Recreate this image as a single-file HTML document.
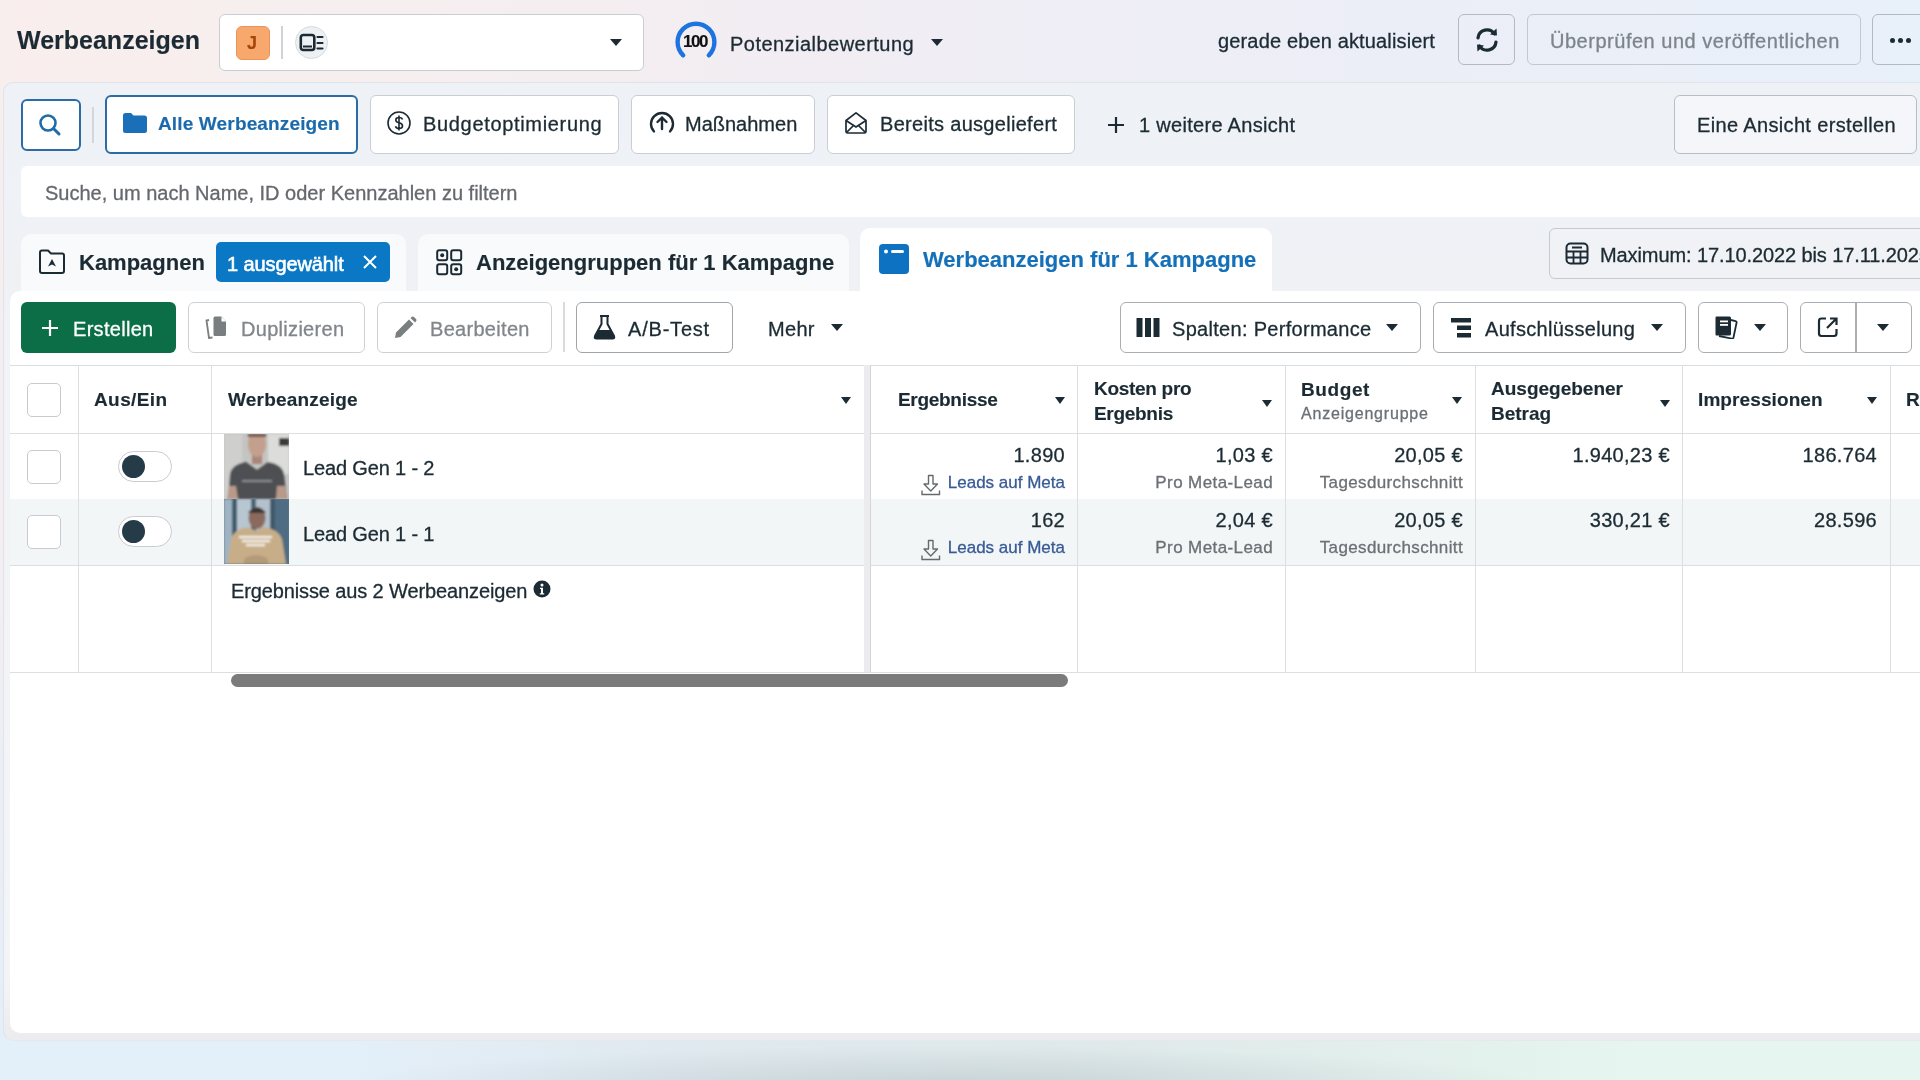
<!DOCTYPE html>
<html><head><meta charset="utf-8">
<style>
*{box-sizing:border-box;margin:0;padding:0}
html,body{width:1920px;height:1080px;overflow:hidden}
body{position:relative;font-family:"Liberation Sans",sans-serif;color:#1c2b33;
 background:linear-gradient(90deg,#f9eeed 0%,#f5eef0 28%,#f0edf4 48%,#eceef7 72%,#e8f0f9 100%);}
.a{position:absolute}
.t{position:absolute;white-space:nowrap;line-height:1;will-change:transform;-webkit-text-stroke:0.3px currentColor}
.b{-webkit-text-stroke:0.15px currentColor}
.r{text-align:right}
.btn{position:absolute;background:#fff;border:1.5px solid #c9ced3;border-radius:6px}
.caret{position:absolute;width:0;height:0;border-left:6px solid transparent;border-right:6px solid transparent;border-top:7px solid #1c2b33}
.hc{position:absolute;width:0;height:0;border-left:5.5px solid transparent;border-right:5.5px solid transparent;border-top:7px solid #1c2b33}
#bottom{position:absolute;left:0;top:1041px;width:1920px;height:39px;
 background:radial-gradient(ellipse 600px 40px at 950px 45px,rgba(170,185,190,0.45),rgba(170,185,190,0) 100%),linear-gradient(90deg,#e3eff9 0%,#e3eff9 18%,#e0e9ef 35%,#dfe8ea 55%,#e2efec 72%,#e6f5ef 85%,#e7f5f0 100%)}
#panel{position:absolute;left:3px;top:82px;width:1930px;height:959px;border-radius:10px;
 background:linear-gradient(180deg,#eef2f6 0px,#eff1f5 200px,#f1f3f6 260px,#f3f4f7 900px,#ececee 950px);border:1px solid #e0e3e7;border-bottom-color:#e6e8ea}
#lstrip{position:absolute;left:0;top:0;width:14px;height:1080px;background:linear-gradient(180deg,#f8eeed 0%,#f4eef2 50%,#e8eef7 85%,#e3eff9 100%)}
#card{position:absolute;left:10px;top:291px;width:1920px;height:742px;background:#fff;border-radius:10px 0 0 10px}
.s20{font-size:20px;letter-spacing:0.3px}
.hd{font-size:19px;letter-spacing:-0.3px}
.sm{font-size:17px;letter-spacing:0.4px}
.b{font-weight:bold}
.g{color:#767b80}
.vl{position:absolute;width:1.5px;background:#dcdfe2}
.hl{position:absolute;height:1.5px;background:#dcdfe2}
</style></head><body>
<div id="lstrip"></div>
<div id="bottom"></div>

<!-- top bar -->
<div class="t b" style="left:17px;top:28px;font-size:25px;">Werbeanzeigen</div>
<div class="btn" style="left:219px;top:14px;width:425px;height:57px;"></div>
<div class="a" style="left:236px;top:26px;width:34px;height:34px;border-radius:6px;background:#f8a86c;border:1px solid #eb9457"></div>
<div class="t b" style="left:247px;top:34px;font-size:18px;color:#a3470c">J</div>
<div class="a" style="left:281px;top:26px;width:1.5px;height:33px;background:#cfd3d7"></div>
<div class="a" style="left:295px;top:26px;width:33px;height:33px;border-radius:50%;background:#eef1f4;border:1px solid #d6dade"></div>
<svg class="a" style="left:299px;top:33px" width="26" height="20" viewBox="0 0 26 20">
 <rect x="1.8" y="2" width="13.5" height="15" rx="2.5" fill="#eef1f4" stroke="#1c2b33" stroke-width="2.6"/>
 <rect x="4" y="12.5" width="9" height="2" fill="#1c2b33"/>
 <path d="M18.5 4h5M18.5 10h5M18.5 15.5h5" stroke="#1c2b33" stroke-width="2.2" stroke-linecap="round"/>
</svg>
<div class="caret" style="left:610px;top:39px"></div>

<svg class="a" style="left:674px;top:20px" width="46" height="40" viewBox="0 0 46 40">
 <path d="M9.2 35.3 A18.4 18.4 0 1 1 34.8 35.3" fill="none" stroke="#1b74e0" stroke-width="4.4" stroke-linecap="round"/>
</svg>
<div class="t b" style="left:683px;top:32.8px;font-size:17px;letter-spacing:-1.4px;color:#111">100</div>
<div class="t s20" style="left:730px;top:34px;letter-spacing:0.47px">Potenzialbewertung</div>
<div class="caret" style="left:931px;top:39px"></div>

<div class="t s20" style="left:1218px;top:31px;letter-spacing:0.15px">gerade eben aktualisiert</div>
<div class="btn" style="left:1458px;top:14px;width:57px;height:51px;background:transparent;border-color:#b4b9c0"></div>
<svg class="a" style="left:1473px;top:27px" width="28" height="26" viewBox="0 0 28 26">
 <path d="M5 11 A9 9 0 0 1 21.5 7" fill="none" stroke="#1c2b33" stroke-width="3.2" stroke-linecap="round"/>
 <path d="M23 15 A9 9 0 0 1 6.5 19" fill="none" stroke="#1c2b33" stroke-width="3.2" stroke-linecap="round"/>
 <path d="M17 7.5 L24 8.5 L23.5 1.5Z" fill="#1c2b33"/>
 <path d="M11 18.5 L4 17.5 L4.5 24.5Z" fill="#1c2b33"/>
</svg>
<div class="btn" style="left:1527px;top:14px;width:334px;height:51px;background:transparent;border-color:#c3c8ce"></div>
<div class="t s20" style="left:1550px;top:31px;color:#7d848b;letter-spacing:0.52px">Überprüfen und veröffentlichen</div>
<div class="btn" style="left:1872px;top:14px;width:60px;height:51px;background:transparent;border-color:#b4b9c0"></div>
<div class="a" style="left:1890px;top:38px;width:5px;height:5px;border-radius:50%;background:#1c2b33;box-shadow:8px 0 0 #1c2b33,16px 0 0 #1c2b33"></div>

<div id="panel"></div>

<!-- view tabs row -->
<div class="btn" style="left:21px;top:99px;width:60px;height:52px;border:2px solid #2a6ca3"></div>
<svg class="a" style="left:38px;top:113px" width="26" height="26" viewBox="0 0 26 26">
 <circle cx="10" cy="10" r="7.5" fill="none" stroke="#1f6aa8" stroke-width="2.6"/>
 <path d="M15.5 15.5 L21 21" stroke="#1f6aa8" stroke-width="3" stroke-linecap="round"/>
</svg>
<div class="a" style="left:92px;top:107px;width:1.5px;height:36px;background:#d3d7dc"></div>

<div class="btn" style="left:105px;top:95px;width:253px;height:59px;border:2px solid #2a6ca3"></div>
<svg class="a" style="left:122px;top:112px" width="26" height="22" viewBox="0 0 26 22">
 <path d="M1 3.5 Q1 1 3.5 1 H9 L11.5 3.5 H22.5 Q25 3.5 25 6 V18.5 Q25 21 22.5 21 H3.5 Q1 21 1 18.5Z" fill="#1a6fb9"/>
</svg>
<div class="t b" style="left:158px;top:114px;font-size:19px;color:#1a6aac;letter-spacing:0.15px">Alle Werbeanzeigen</div>

<div class="btn" style="left:370px;top:95px;width:249px;height:59px;"></div>
<svg class="a" style="left:386px;top:110px" width="26" height="26" viewBox="0 0 26 26">
 <circle cx="13" cy="13" r="11" fill="none" stroke="#1c2b33" stroke-width="1.6"/>
 <path d="M16.5 9.5 Q16 7.5 13 7.5 Q9.8 7.5 9.8 10 Q9.8 12.2 13 12.8 Q16.5 13.5 16.5 16 Q16.5 18.5 13 18.5 Q10 18.5 9.5 16.3 M13 5.5V20.5" fill="none" stroke="#1c2b33" stroke-width="1.6"/>
</svg>
<div class="t s20" style="left:423px;top:114px;letter-spacing:0.67px">Budgetoptimierung</div>

<div class="btn" style="left:631px;top:95px;width:184px;height:59px;"></div>
<svg class="a" style="left:649px;top:110px" width="26" height="24" viewBox="0 0 26 24">
 <path d="M5 21.5 A11 11 0 1 1 21 21.5" fill="none" stroke="#1c2b33" stroke-width="2.4" stroke-linecap="round"/>
 <path d="M13 19V7.5 M8.5 12 L13 7.5 L17.5 12" fill="none" stroke="#1c2b33" stroke-width="2.4" stroke-linecap="round" stroke-linejoin="round"/>
</svg>
<div class="t s20" style="left:685px;top:114px;letter-spacing:0px">Maßnahmen</div>

<div class="btn" style="left:827px;top:95px;width:248px;height:59px;"></div>
<svg class="a" style="left:844px;top:111px" width="24" height="24" viewBox="0 0 24 24">
 <path d="M2 9.5 L12 1.8 L22 9.5 V20.5 Q22 22 20.5 22 H3.5 Q2 22 2 20.5Z" fill="none" stroke="#1c2b33" stroke-width="1.7" stroke-linejoin="round"/>
 <path d="M2 9.5 L12 16 L22 9.5 M2.5 21.5 L9.5 14.5 M21.5 21.5 L14.5 14.5" fill="none" stroke="#1c2b33" stroke-width="1.7"/>
</svg>
<div class="t s20" style="left:880px;top:114px;">Bereits ausgeliefert</div>

<svg class="a" style="left:1106px;top:116px" width="20" height="18" viewBox="0 0 20 18">
 <path d="M10 1V17 M2 9H18" stroke="#1c2b33" stroke-width="2.2"/>
</svg>
<div class="t s20" style="left:1139px;top:115px;">1 weitere Ansicht</div>

<div class="btn" style="left:1674px;top:95px;width:243px;height:59px;background:rgba(255,255,255,0.35);border-color:#b9bec4"></div>
<div class="t s20" style="left:1697px;top:115px;letter-spacing:0.35px">Eine Ansicht erstellen</div>

<!-- search -->
<div class="a" style="left:21px;top:166px;width:1920px;height:51px;background:#fff;border-radius:6px 0 0 6px"></div>
<div class="t s20" style="left:45px;top:183px;color:#65686c;letter-spacing:0px">Suche, um nach Name, ID oder Kennzahlen zu filtern</div>


<!-- level tabs -->
<div class="a" style="left:21px;top:234px;width:385px;height:60px;background:#f8fafc;border-radius:10px 10px 0 0"></div>
<svg class="a" style="left:38px;top:249px" width="28" height="26" viewBox="0 0 28 26">
 <path d="M2 3.5 Q2 1.5 4 1.5 H10 L13 4.5 H24 Q26 4.5 26 6.5 V22 Q26 24 24 24 H4 Q2 24 2 22Z" fill="none" stroke="#1c2b33" stroke-width="2"/>
 <path d="M10 17.5 L14 10 L18 17.5 L14 15.5Z" fill="#1c2b33"/>
</svg>
<div class="t b" style="left:79px;top:252px;font-size:22px;">Kampagnen</div>
<div class="a" style="left:216px;top:242px;width:174px;height:40px;background:#0b78c6;border-radius:5px"></div>
<div class="t" style="left:227px;top:254px;font-size:20px;color:#fff;-webkit-text-stroke:0.6px #fff;letter-spacing:-0.1px">1 ausgewählt</div>
<svg class="a" style="left:362px;top:254px" width="16" height="16" viewBox="0 0 16 16">
 <path d="M2 2L14 14M14 2L2 14" stroke="#fff" stroke-width="2"/>
</svg>

<div class="a" style="left:418px;top:234px;width:431px;height:60px;background:#f8fafc;border-radius:10px 10px 0 0"></div>
<svg class="a" style="left:436px;top:249px" width="27" height="27" viewBox="0 0 27 27">
 <rect x="1.2" y="1.2" width="10" height="10" rx="2" fill="none" stroke="#1c2b33" stroke-width="2"/>
 <rect x="15.2" y="1.2" width="10" height="10" rx="2" fill="none" stroke="#1c2b33" stroke-width="2"/>
 <rect x="1.2" y="15.2" width="10" height="10" rx="2" fill="none" stroke="#1c2b33" stroke-width="2"/>
 <rect x="15.2" y="15.2" width="10" height="10" rx="2" fill="none" stroke="#1c2b33" stroke-width="2"/>
 <circle cx="6.2" cy="6.2" r="2" fill="#1c2b33"/><circle cx="20.2" cy="20.2" r="2" fill="#1c2b33"/>
</svg>
<div class="t b" style="left:476px;top:252px;font-size:22px;">Anzeigengruppen für 1 Kampagne</div>

<div class="a" style="left:860px;top:228px;width:412px;height:66px;background:#fff;border-radius:10px 10px 0 0"></div>
<svg class="a" style="left:879px;top:244px" width="30" height="30" viewBox="0 0 30 30">
 <rect x="0" y="0" width="30" height="30" rx="4" fill="#0e72c2"/>
 <circle cx="7" cy="7.5" r="2" fill="#fff"/><rect x="12" y="6" width="13" height="3" rx="1.5" fill="#fff"/>
</svg>
<div class="t b" style="left:923px;top:249px;font-size:22px;color:#1470b8">Werbeanzeigen für 1 Kampagne</div>

<div class="btn" style="left:1549px;top:228px;width:400px;height:51px;background:#f0f2f5;border-color:#c6cacf"></div>
<svg class="a" style="left:1565px;top:242px" width="24" height="23" viewBox="0 0 24 23">
 <rect x="1.5" y="1.5" width="21" height="20" rx="4" fill="none" stroke="#1c2b33" stroke-width="2"/>
 <path d="M7 5.5H17 M2 9.5H22 M2 15.5H22 M8.5 9.5V21.5 M15.5 9.5V21.5" stroke="#1c2b33" stroke-width="1.8"/>
</svg>
<div class="t s20" style="left:1600px;top:245px;letter-spacing:-0.1px">Maximum: 17.10.2022 bis 17.11.2025</div>

<div id="card"></div>

<!-- toolbar -->
<div class="a" style="left:21px;top:302px;width:155px;height:51px;background:#0b6e47;border-radius:6px"></div>
<svg class="a" style="left:40px;top:318px" width="20" height="20" viewBox="0 0 20 20"><path d="M10 2V18M2 10H18" stroke="#fff" stroke-width="2.2"/></svg>
<div class="t s20" style="left:73px;top:319px;color:#fff">Erstellen</div>

<div class="btn" style="left:188px;top:302px;width:177px;height:51px;border-color:#cfd2d5"></div>
<svg class="a" style="left:204px;top:315px" width="24" height="25" viewBox="0 0 24 25">
 <path d="M5 5 L2.5 5.5 L5 23 L8.5 22.5" fill="none" stroke="#797e81" stroke-width="1.8"/>
 <path d="M9.5 3 Q9.5 1.5 11 1.5 H17.5 L22 6.5 V19.5 Q22 21 20.5 21 H11 Q9.5 21 9.5 19.5Z" fill="#797e81"/>
 <path d="M17.5 1.5 V6.5 H22" fill="#fff"/>
</svg>
<div class="t s20" style="left:241px;top:319px;color:#80868b">Duplizieren</div>

<div class="btn" style="left:377px;top:302px;width:175px;height:51px;border-color:#cfd2d5"></div>
<svg class="a" style="left:393px;top:316px" width="24" height="24" viewBox="0 0 24 24">
 <path d="M2 22 L3 16.5 L16 3.5 L20.5 8 L7.5 21Z" fill="#797e81"/>
 <path d="M17.5 2 L19 0.8 Q20 0 21 1 L23 3 Q24 4 23.2 5 L22 6.5Z" fill="#797e81"/>
</svg>
<div class="t s20" style="left:430px;top:319px;color:#80868b">Bearbeiten</div>

<div class="a" style="left:563px;top:302px;width:1.5px;height:50px;background:#d8dbde"></div>

<div class="btn" style="left:576px;top:302px;width:157px;height:51px;border-color:#9fa5aa"></div>
<svg class="a" style="left:593px;top:314px" width="23" height="26" viewBox="0 0 23 26">
 <path d="M7 2H16 M8.5 2V10 L2 22 Q1 24.5 3.5 24.5 H19.5 Q22 24.5 21 22 L14.5 10 V2" fill="none" stroke="#1c2b33" stroke-width="2"/>
 <path d="M5 16 H18 L21 22 Q22 24.5 19.5 24.5 H3.5 Q1 24.5 2 22Z" fill="#1c2b33"/>
</svg>
<div class="t s20" style="left:628px;top:319px;letter-spacing:0.8px">A/B-Test</div>

<div class="t s20" style="left:768px;top:319px;">Mehr</div>
<div class="caret" style="left:831px;top:324px"></div>

<div class="btn" style="left:1120px;top:302px;width:301px;height:51px;border-color:#a9aeb3"></div>
<svg class="a" style="left:1136px;top:318px" width="24" height="19" viewBox="0 0 24 19"><rect x="0.5" y="0" width="6" height="19" fill="#1c2b33"/><rect x="9" y="0" width="6" height="19" fill="#1c2b33"/><rect x="17.5" y="0" width="6" height="19" fill="#1c2b33"/></svg>
<div class="t s20" style="left:1172px;top:319px;">Spalten: Performance</div>
<div class="caret" style="left:1386px;top:324px"></div>

<div class="btn" style="left:1433px;top:302px;width:253px;height:51px;border-color:#a9aeb3"></div>
<svg class="a" style="left:1451px;top:318px" width="22" height="20" viewBox="0 0 22 20"><rect x="0" y="0" width="20" height="4.5" fill="#1c2b33"/><rect x="6" y="7.5" width="14" height="4.5" fill="#1c2b33"/><rect x="6" y="15" width="14" height="4.5" fill="#1c2b33"/></svg>
<div class="t s20" style="left:1485px;top:319px;">Aufschlüsselung</div>
<div class="caret" style="left:1651px;top:324px"></div>

<div class="btn" style="left:1698px;top:302px;width:90px;height:51px;border-color:#a9aeb3"></div>
<svg class="a" style="left:1714px;top:316px" width="24" height="23" viewBox="0 0 24 23">
 <path d="M17 4 L21.5 5 Q23 5.5 22.5 7 L19.5 21.5 Q19 23 17.5 22.5 L5 20" fill="none" stroke="#1c2b33" stroke-width="1.8"/>
 <rect x="1" y="0.5" width="16" height="19" rx="1.5" fill="#1c2b33"/>
 <rect x="0" y="0.5" width="1.5" height="19" fill="#fff"/>
 <rect x="6" y="4.5" width="8" height="1.8" fill="#fff"/><rect x="6" y="8" width="8" height="1.8" fill="#fff"/>
</svg>
<div class="caret" style="left:1754px;top:324px"></div>

<div class="btn" style="left:1800px;top:302px;width:112px;height:51px;border-color:#a9aeb3"></div>
<div class="a" style="left:1855px;top:303px;width:1.5px;height:49px;background:#a9aeb3"></div>
<svg class="a" style="left:1817px;top:316px" width="22" height="22" viewBox="0 0 22 22">
 <path d="M9 2.5 H4.5 Q2 2.5 2 5 V17.5 Q2 20 4.5 20 H17 Q19.5 20 19.5 17.5 V13" fill="none" stroke="#1c2b33" stroke-width="2.2"/>
 <path d="M13 2.5 H19.5 V9 M19.5 2.5 L10 12" fill="none" stroke="#1c2b33" stroke-width="2.2"/>
</svg>
<div class="caret" style="left:1877px;top:324px"></div>


<!-- table -->
<div class="a" style="left:10px;top:499px;width:1920px;height:66px;background:#f2f6f7"></div>
<div class="hl" style="left:10px;top:364.5px;width:1920px"></div>
<div class="hl" style="left:10px;top:432.5px;width:1920px"></div>
<div class="hl" style="left:10px;top:564.5px;width:1920px"></div>
<div class="hl" style="left:10px;top:671.5px;width:1920px"></div>
<div class="vl" style="left:77.5px;top:365px;height:307px"></div>
<div class="vl" style="left:210.5px;top:365px;height:307px"></div>
<div class="a" style="left:864px;top:365px;width:7px;height:307px;background:#ececee;border-right:1.5px solid #d3d6d9"></div>
<div class="vl" style="left:1076.5px;top:365px;height:307px"></div>
<div class="vl" style="left:1284.5px;top:365px;height:307px"></div>
<div class="vl" style="left:1474.5px;top:365px;height:307px"></div>
<div class="vl" style="left:1681.5px;top:365px;height:307px"></div>
<div class="vl" style="left:1889.5px;top:365px;height:307px"></div>

<div class="a" style="left:27px;top:383px;width:34px;height:34px;border:1.5px solid #c7cbcf;border-radius:5px;background:#fff"></div>
<div class="t b hd" style="left:94px;top:390px;letter-spacing:0.4px">Aus/Ein</div>
<div class="t b hd" style="left:228px;top:390px;letter-spacing:0.2px">Werbeanzeige</div>
<div class="hc" style="left:841px;top:397px"></div>
<div class="t b hd" style="left:898px;top:390px;">Ergebnisse</div>
<div class="hc" style="left:1055px;top:397px"></div>
<div class="t b hd" style="left:1094px;top:378.5px;">Kosten pro</div>
<div class="t b hd" style="left:1094px;top:404.2px;">Ergebnis</div>
<div class="hc" style="left:1262px;top:399.5px"></div>
<div class="t b hd" style="left:1301px;top:379.7px;letter-spacing:0.6px">Budget</div>
<div class="t" style="left:1301px;top:406px;font-size:16px;letter-spacing:0.8px;color:#6b7075">Anzeigengruppe</div>
<div class="hc" style="left:1452px;top:397px"></div>
<div class="t b hd" style="left:1491px;top:378.5px;letter-spacing:0px">Ausgegebener</div>
<div class="t b hd" style="left:1491px;top:404.2px;letter-spacing:0px">Betrag</div>
<div class="hc" style="left:1660px;top:399.5px"></div>
<div class="t b hd" style="left:1698px;top:390px;letter-spacing:0.1px">Impressionen</div>
<div class="hc" style="left:1867px;top:397px"></div>
<div class="t b hd" style="left:1906px;top:390px;">R</div>

<!-- row 1 -->
<div class="a" style="left:27px;top:450px;width:34px;height:34px;border:1.5px solid #c7cbcf;border-radius:5px;background:#fff"></div>
<div class="a" style="left:118px;top:451px;width:54px;height:31px;border:1.5px solid #c9cdd0;border-radius:16px;background:#fff"></div>
<div class="a" style="left:122px;top:455px;width:23px;height:23px;border-radius:50%;background:#263b48"></div>
<svg class="a" style="left:224px;top:434px" width="65" height="65" viewBox="0 0 65 65">
 <defs><filter id="bl" x="-10%" y="-10%" width="120%" height="120%"><feGaussianBlur stdDeviation="1.2"/></filter></defs>
 <rect width="65" height="65" fill="#c4c4c2"/>
 <g filter="url(#bl)">
 <rect x="0" y="0" width="18" height="65" fill="#cfcfcd"/>
 <rect x="44" y="0" width="21" height="40" fill="#dcdcda"/>
 <rect x="55" y="4" width="10" height="8" fill="#3a3a3a"/>
 <rect x="28" y="18" width="10" height="12" fill="#a98677"/>
 <ellipse cx="33" cy="10" rx="9" ry="13" fill="#c49f8e"/>
 <rect x="24" y="0" width="18" height="3" fill="#6e5648"/>
 <path d="M4 65 L6 40 Q8 30 22 28 L33 36 L44 28 Q58 30 60 40 L63 65Z" fill="#4d4f53"/>
 <path d="M3 65 L5 52 L12 52 L14 65Z" fill="#b99a88"/>
 <path d="M52 65 L53 52 L61 52 L63 65Z" fill="#b99a88"/>
 <rect x="18" y="46" width="30" height="2" fill="#8a8c90"/>
 </g>
</svg>
<div class="t s20" style="left:303px;top:458px;letter-spacing:-0.15px">Lead Gen 1 - 2</div>

<div class="t s20 r" style="left:965px;width:100px;top:444.5px;">1.890</div>
<svg class="a" style="left:921px;top:474px" width="20" height="22" viewBox="0 0 20 22">
 <path d="M7.5 1.5 H12 V10 H16.5 L9.75 17 L3 10 H7.5Z" fill="none" stroke="#666a6d" stroke-width="1.4" stroke-linejoin="round"/>
 <path d="M1 16.5 V20.5 H18.5 V16.5" fill="none" stroke="#666a6d" stroke-width="1.4"/>
</svg>
<div class="t r" style="left:900px;width:165px;top:474px;font-size:17px;color:#385a96">Leads auf Meta</div>
<div class="t s20 r" style="left:1100px;width:173px;top:444.5px;">1,03 €</div>
<div class="t r" style="left:1100px;width:173px;top:474px;font-size:17px;letter-spacing:0.4px;color:#6b7075">Pro Meta-Lead</div>
<div class="t s20 r" style="left:1300px;width:163px;top:444.5px;">20,05 €</div>
<div class="t r" style="left:1300px;width:163px;top:474px;font-size:17px;letter-spacing:0.37px;color:#6b7075">Tagesdurchschnitt</div>
<div class="t s20 r" style="left:1490px;width:180px;top:444.5px;">1.940,23 €</div>
<div class="t s20 r" style="left:1700px;width:177px;top:444.5px;">186.764</div>

<!-- row 2 -->
<div class="a" style="left:27px;top:515px;width:34px;height:34px;border:1.5px solid #c7cbcf;border-radius:5px;background:#fff"></div>
<div class="a" style="left:118px;top:516px;width:54px;height:31px;border:1.5px solid #c9cdd0;border-radius:16px;background:#fff"></div>
<div class="a" style="left:122px;top:520px;width:23px;height:23px;border-radius:50%;background:#263b48"></div>
<svg class="a" style="left:224px;top:499px" width="65" height="65" viewBox="0 0 65 65">
 <rect width="65" height="65" fill="#5f7a8e"/>
 <g filter="url(#bl)">
 <rect x="0" y="0" width="8" height="65" fill="#9fb3c2"/>
 <rect x="8" y="0" width="5" height="65" fill="#3f5a6e"/>
 <rect x="13" y="0" width="14" height="65" fill="#b7c6d1"/>
 <rect x="27" y="0" width="5" height="65" fill="#4a6476"/>
 <rect x="32" y="0" width="14" height="50" fill="#b2c1cc"/>
 <rect x="46" y="0" width="5" height="65" fill="#3f596b"/>
 <rect x="51" y="0" width="14" height="65" fill="#4f6d82"/>
 <ellipse cx="33" cy="19" rx="8.5" ry="11" fill="#8a6a5b"/>
 <path d="M24.5 13 Q33 4 41.5 13 L41.5 14 L24.5 14Z" fill="#3b3430"/>
 <path d="M3 65 L7 40 Q10 30 24 28 L32 32 L40 28 Q54 30 58 40 L62 65Z" fill="#c7ae88"/>
 <rect x="15" y="37" width="33" height="2.2" fill="#f4f1ea"/>
 <rect x="18" y="41" width="28" height="2.2" fill="#f4f1ea"/>
 <rect x="22" y="45" width="19" height="2.2" fill="#f4f1ea"/>
 <path d="M20 60 Q32 52 44 60 L44 65 L20 65Z" fill="#b49a78"/>
 </g>
</svg>
<div class="t s20" style="left:303px;top:524px;letter-spacing:-0.15px">Lead Gen 1 - 1</div>

<div class="t s20 r" style="left:965px;width:100px;top:510px;">162</div>
<svg class="a" style="left:921px;top:539px" width="20" height="22" viewBox="0 0 20 22">
 <path d="M7.5 1.5 H12 V10 H16.5 L9.75 17 L3 10 H7.5Z" fill="none" stroke="#666a6d" stroke-width="1.4" stroke-linejoin="round"/>
 <path d="M1 16.5 V20.5 H18.5 V16.5" fill="none" stroke="#666a6d" stroke-width="1.4"/>
</svg>
<div class="t r" style="left:900px;width:165px;top:539px;font-size:17px;color:#385a96">Leads auf Meta</div>
<div class="t s20 r" style="left:1100px;width:173px;top:510px;">2,04 €</div>
<div class="t r" style="left:1100px;width:173px;top:539px;font-size:17px;letter-spacing:0.4px;color:#6b7075">Pro Meta-Lead</div>
<div class="t s20 r" style="left:1300px;width:163px;top:510px;">20,05 €</div>
<div class="t r" style="left:1300px;width:163px;top:539px;font-size:17px;letter-spacing:0.37px;color:#6b7075">Tagesdurchschnitt</div>
<div class="t s20 r" style="left:1490px;width:180px;top:510px;">330,21 €</div>
<div class="t s20 r" style="left:1700px;width:177px;top:510px;">28.596</div>

<!-- footer -->
<div class="t s20" style="left:230.5px;top:580.5px;letter-spacing:-0.12px">Ergebnisse aus 2 Werbeanzeigen</div>
<svg class="a" style="left:533px;top:580px" width="18" height="18" viewBox="0 0 18 18">
 <circle cx="9" cy="9" r="8.5" fill="#1c2b33"/>
 <circle cx="9" cy="5" r="1.5" fill="#fff"/><path d="M7 7.8H10V13.2H11.2V14.5H6.8V13.2H8V9.1H7Z" fill="#fff"/>
</svg>

<div class="a" style="left:231px;top:674px;width:837px;height:13px;border-radius:7px;background:#7b7b7b"></div>

</body></html>
